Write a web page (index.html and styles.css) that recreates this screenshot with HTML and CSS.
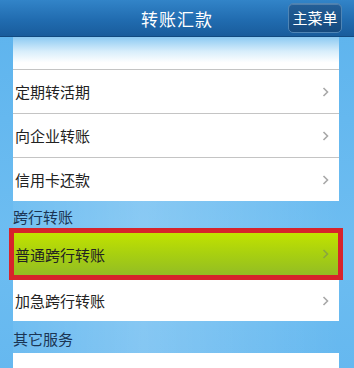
FILE: index.html
```html
<!DOCTYPE html>
<html lang="zh-CN">
<head>
    <meta charset="UTF-8">
    <meta name="viewport" content="width=device-width, initial-scale=1.0">
    <title>转账汇款</title>
    <link rel="stylesheet" href="styles.css">
</head>
<body>
    <div class="header">
        <h1>转账汇款</h1>
        <a class="menu-btn" href="#">主菜单</a>
    </div>

    <div class="content">
        <ul class="list">
            <li class="list-top"></li>
            <li class="item">定期转活期<span class="arrow"><svg width="7" height="10" viewBox="0 0 7 10"><polyline points="1.5,1 5.5,5 1.5,9" fill="none" stroke="#a8a8a8" stroke-width="1.6"/></svg></span></li>
            <li class="item">向企业转账<span class="arrow"><svg width="7" height="10" viewBox="0 0 7 10"><polyline points="1.5,1 5.5,5 1.5,9" fill="none" stroke="#a8a8a8" stroke-width="1.6"/></svg></span></li>
            <li class="item">信用卡还款<span class="arrow"><svg width="7" height="10" viewBox="0 0 7 10"><polyline points="1.5,1 5.5,5 1.5,9" fill="none" stroke="#a8a8a8" stroke-width="1.6"/></svg></span></li>
        </ul>

        <div class="section-title">跨行转账</div>
        <ul class="list">
            <li class="item active">普通跨行转账<span class="arrow"><svg width="7" height="10" viewBox="0 0 7 10"><polyline points="1.5,1 5.5,5 1.5,9" fill="none" stroke="#8aa640" stroke-width="1.6"/></svg></span></li>
            <li class="item short">加急跨行转账<span class="arrow"><svg width="7" height="10" viewBox="0 0 7 10"><polyline points="1.5,1 5.5,5 1.5,9" fill="none" stroke="#a8a8a8" stroke-width="1.6"/></svg></span></li>
        </ul>

        <div class="section-title second">其它服务</div>
        <ul class="list">
            <li class="item">收款人名册维护<span class="arrow"><svg width="7" height="10" viewBox="0 0 7 10"><polyline points="1.5,1 5.5,5 1.5,9" fill="none" stroke="#a8a8a8" stroke-width="1.6"/></svg></span></li>
        </ul>
    </div>
</body>
</html>
```

FILE: styles.css
```css
/* Base */
body, html {
    margin: 0;
    padding: 0;
    font-family: "Noto Sans CJK SC", "Noto Sans", sans-serif;
    background: linear-gradient(to bottom, #5db3ed, #6dbdf1 60%, #64b7ef);
    overflow: hidden;
}

ul {
    margin: 0;
    padding: 0;
    list-style: none;
}

/* Header */
.header {
    height: 36px;
    display: flex;
    align-items: center;
    justify-content: center;
    position: relative;
    background: linear-gradient(to bottom, #3284c8, #216cb0 55%, #195c9c);
    border-bottom: 1px solid #124a80;
}

.header h1 {
    margin: 0;
    font-size: 17px;
    font-weight: normal;
    color: #ffffff;
    letter-spacing: 1px;
}

.menu-btn {
    position: absolute;
    right: 12px;
    top: 3px;
    width: 52px;
    height: 28px;
    line-height: 28px;
    text-align: center;
    font-size: 15px;
    color: #ffffff;
    text-decoration: none;
    border: 1px solid #4f85b5;
    border-radius: 5px;
    background: linear-gradient(to bottom, #245f98, #164a7e);
    box-shadow: inset 0 1px 0 rgba(255, 255, 255, 0.2);
}

/* Content */
.content {
    padding: 0 15px 0 13px;
    border-left: 4px solid #7ccaf4;
    margin-left: -4px;
}

.list {
    background-color: #ffffff;
}

.list-top {
    height: 32px;
    background: linear-gradient(to bottom, #8ccaf2, #d8eefb 45%, #ffffff 80%);
    border-bottom: 1px solid #c4c4c4;
}

.item {
    height: 43px;
    display: flex;
    align-items: center;
    justify-content: space-between;
    padding: 0 10px 0 2px;
    font-size: 15px;
    color: #222222;
    border-bottom: 1px solid #c4c4c4;
}

.list .item:last-child {
    border-bottom: none;
}

.item.short {
    height: 41px;
}

.arrow {
    display: flex;
    align-items: center;
}

.item.active {
    height: 42px;
    margin: 0 -4px;
    border: 5px solid #d7232b;
    padding: 0 9px 0 1px;
    background: linear-gradient(to bottom, #c2e200, #a8d010 50%, #93bd24);
}

.section-title {
    height: 27px;
    line-height: 31px;
    font-size: 15px;
    color: #1b3554;
    background: linear-gradient(to right, rgba(255,255,255,0.05), rgba(255,255,255,0.2) 40%, rgba(255,255,255,0));
}

.section-title.second {
    height: 32px;
    line-height: 36px;
}
```
